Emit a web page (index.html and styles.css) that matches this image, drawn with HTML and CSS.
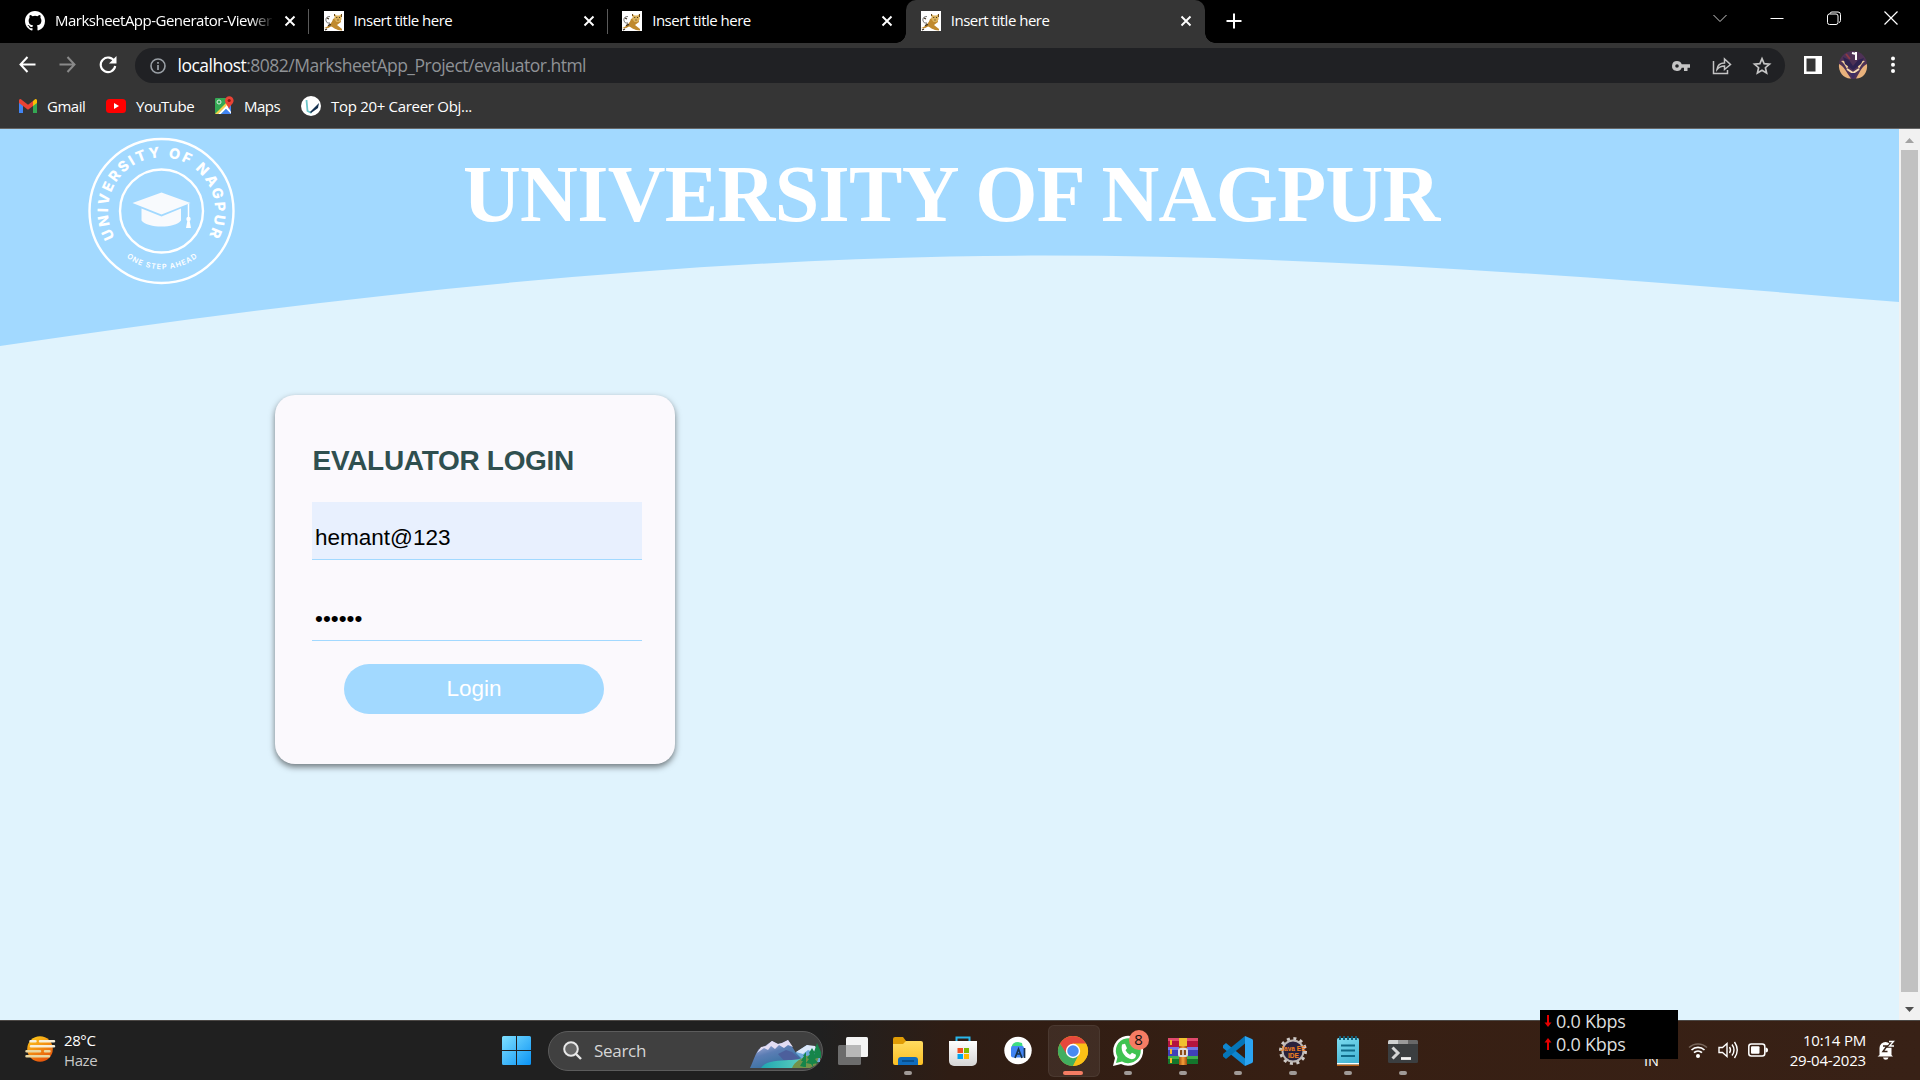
FILE: index.html
```html
<!DOCTYPE html>
<html lang="en">
<head>
<meta charset="utf-8">
<title>Evaluator Login</title>
<link rel="stylesheet" href="styles.css">
</head>
<body>
<svg width="0" height="0" class="defs">
  <defs>
    <symbol id="cat" viewBox="0 0 20 20">
      <rect width="20" height="20" fill="#fff"/>
      <path d="M6 5.500Q1 5.500 2 10q1 3 4 2" stroke="#777" stroke-width="1" fill="none"/>
      <path d="M0 17c4-1 8-5 9-9l2-1h5l1 4-4 3 5 4v1.500C12 19.500 9 16 7 15.500c-3 2-5 2-7 1.500z" fill="#c08a2e"/>
      <path d="M10.500 3l2 1.500h3l2-1.500v5.500l-2 2.500h-3l-2-2.500z" fill="#dcb25a"/>
      <path d="M5 13l2 1M3 7l2 1M4 14l1.500 1M12.300 6.500h.9M15 6.500h.9M13.500 9h1M1 19l2-1" stroke="#3b2d1c" stroke-width="1.200"/>
      <path d="M10.500 3v2M17.500 3v3" stroke="#6a4a1c" stroke-width="1"/>
    </symbol>
    <symbol id="x" viewBox="0 0 12 12"><path d="M1.500 1.500l9 9m0-9l-9 9" stroke="#fff" stroke-width="1.900"/></symbol>
    <linearGradient id="win" x2="1" y2="1"><stop stop-color="#7fe0ff"/><stop offset="1" stop-color="#0a93f5"/></linearGradient>
    <linearGradient id="sun" x2=".5" y2="1"><stop stop-color="#ffd21a"/><stop offset="1" stop-color="#e8590c"/></linearGradient>
    <linearGradient id="mount" x1="0" y1="0" x2=".6" y2="1"><stop stop-color="#d6ccef"/><stop offset=".5" stop-color="#5b7db4"/><stop offset="1" stop-color="#2e6f9c"/></linearGradient>
    <linearGradient id="lake" x2="1"><stop stop-color="#20a8b0"/><stop offset="1" stop-color="#5fd0c0"/></linearGradient>
    <linearGradient id="fold" y2="1" x2="0"><stop stop-color="#ffdc60"/><stop offset="1" stop-color="#fbbf24"/></linearGradient>
    <linearGradient id="bag" y2="1" x2="0"><stop stop-color="#fff"/><stop offset="1" stop-color="#d5d5d5"/></linearGradient>
    <linearGradient id="note" y2="1" x2=".4"><stop stop-color="#7ddcf0"/><stop offset="1" stop-color="#45b5d5"/></linearGradient>
    <linearGradient id="belt" x2="1"><stop stop-color="#a8500e"/><stop offset=".5" stop-color="#f5a13a"/><stop offset="1" stop-color="#a04a0c"/></linearGradient>
  </defs>
</svg>

<div class="tabs">
  <div class="tab">
    <svg width="20" height="20" viewBox="0 0 16 16"><path fill="#fff" d="M8 0C3.58 0 0 3.58 0 8c0 3.54 2.29 6.53 5.47 7.59.4.07.55-.17.55-.38 0-.19-.01-.82-.01-1.49-2.01.37-2.53-.49-2.69-.94-.09-.23-.48-.94-.82-1.13-.28-.15-.68-.52-.01-.53.63-.01 1.08.58 1.23.82.72 1.21 1.87.87 2.33.66.07-.52.28-.87.51-1.07-1.78-.2-3.64-.89-3.64-3.95 0-.87.31-1.59.82-2.15-.08-.2-.36-1.02.08-2.12 0 0 .67-.21 2.2.82a7.6 7.6 0 0 1 4 0c1.53-1.04 2.2-.82 2.2-.82.44 1.1.16 1.92.08 2.12.51.56.82 1.27.82 2.15 0 3.07-1.87 3.75-3.65 3.95.29.25.54.73.54 1.48 0 1.07-.01 1.93-.01 2.2 0 .21.15.46.55.38A8.01 8.01 0 0 0 16 8c0-4.42-3.58-8-8-8z"/></svg>
    <span class="tab-title faded">MarksheetApp-Generator-Viewer</span>
    <svg width="12" height="12"><use href="#x"/></svg>
  </div>
  <div class="tab">
    <svg width="20" height="20"><use href="#cat"/></svg>
    <span class="tab-title">Insert title here</span>
    <svg width="12" height="12"><use href="#x"/></svg>
  </div>
  <div class="tab no-line">
    <svg width="20" height="20"><use href="#cat"/></svg>
    <span class="tab-title">Insert title here</span>
    <svg width="12" height="12"><use href="#x"/></svg>
  </div>
  <div class="tab active">
    <svg width="20" height="20"><use href="#cat"/></svg>
    <span class="tab-title">Insert title here</span>
    <svg width="12" height="12"><use href="#x"/></svg>
  </div>
  <svg class="plus" width="16" height="16"><path d="M8 .5v15M.5 8h15" stroke="#fff" stroke-width="2"/></svg>
  <div class="window-buttons">
    <svg width="14" height="14"><path d="M.5 4l6.500 6.500L13.500 4" stroke="#ccc" fill="none"/></svg>
    <svg width="14" height="14"><path d="M.5 7.500h13" stroke="#fff"/></svg>
    <svg width="14" height="14"><path d="M3 3V2.500a2 2 0 0 1 2-1.500h6a2.500 2.500 0 0 1 2.500 2.500v6a2 2 0 0 1-1.500 2" stroke="#fff" fill="none"/><rect x=".5" y="3" width="10.500" height="10.500" rx="2" stroke="#fff" fill="none"/></svg>
    <svg width="14" height="14"><path d="M.5.5l13 13m0-13l-13 13" stroke="#fff" stroke-width="1.200"/></svg>
  </div>
</div>

<div class="toolbar">
  <div class="nav">
    <svg width="17" height="17"><path d="M16.500 8.500H1.500M8.500 1L1.500 8.500l7 7.500" stroke="#fff" stroke-width="2" fill="none"/></svg>
    <svg width="17" height="17"><path d="M.5 8.500h15M8.500 1l7 7.500-7 7.500" stroke="#8a8a8a" stroke-width="2" fill="none"/></svg>
    <svg width="18" height="18"><path d="M15.500 5.500A7.300 7.300 0 1 0 16.200 10" stroke="#fff" stroke-width="2.100" fill="none"/><path d="M17.500 0v7.500H10z" fill="#fff"/></svg>
  </div>
  <div class="omnibox">
    <svg width="16" height="16"><circle cx="8" cy="8" r="7" stroke="#9aa0a6" stroke-width="1.600" fill="none"/><path d="M8 7v5M8 4v1.800" stroke="#9aa0a6" stroke-width="1.700"/></svg>
    <span class="url"><b>localhost</b>:8082/MarksheetApp_Project/evaluator.html</span>
    <div class="omni-icons">
      <svg width="18" height="18" viewBox="0 0 18 18"><path fill-rule="evenodd" fill="#c4c4c4" d="M5 4a5 5 0 1 0 4.700 6.800H12V14h3.500v-3.200H18V7.200H9.700A5 5 0 0 0 5 4zm0 3.200a1.800 1.800 0 1 1 0 3.600 1.800 1.800 0 0 1 0-3.600z"/></svg>
      <svg width="20" height="20" viewBox="0 0 20 20"><path d="M1.500 5v12.500h14V14M5 13.500c.5-4.500 3.500-6.500 7.500-6.500V3l6 5.500-6 5v-3.500C9 10 7 11 5 13.500z" stroke="#c4c4c4" stroke-width="1.500" fill="none"/></svg>
      <svg width="18" height="18" viewBox="0 0 18 18"><path d="M9 1.600l2.100 5 5.400.5-4.100 3.600 1.200 5.300L9 13.200 4.400 16l1.200-5.300-4.100-3.600 5.400-.5z" stroke="#c4c4c4" stroke-width="1.700" fill="none"/></svg>
    </div>
  </div>
  <div class="actions">
    <svg width="18" height="18"><path fill="#fff" fill-rule="evenodd" d="M0 0h18v18H0zM2.500 2.500v13h9v-13z"/></svg>
    <svg width="28" height="28" viewBox="0 0 28 28"><circle cx="14" cy="14" r="14" fill="#4e3256"/><path d="M0 13c5 2 7 8 12 14.500C5 28-1 21 0 13zM28 13c-5 2-7 8-11 14.500 7 0 12-6 11-14.500z" fill="#e9b27c"/><path d="M2 10q5-1 8 3l-2 5q-3-6-6-8zM26 10q-5-1-8 3l2 5q3-6 6-8z" fill="#f3cf9c"/><path d="M4 6l6 3 4 6 5-6 6-2-3 6-8 6-8-6z" fill="#2e2350"/><path d="M8 18l6 4 6-4" stroke="#f7dcb4" stroke-width="2" fill="none"/><path d="M17 1v8M13 2l4 1" stroke="#fff" stroke-width="2"/><path d="M7 3l4 5" stroke="#8c3a45" stroke-width="2"/><path d="M11 22l3 6 3-6" fill="#3c2d66"/></svg>
    <svg width="4" height="18"><circle cx="2" cy="2.500" r="2" fill="#fff"/><circle cx="2" cy="8.700" r="2" fill="#fff"/><circle cx="2" cy="15" r="2" fill="#fff"/></svg>
  </div>
</div>

<div class="bookmarks">
  <div class="bm gmail"><svg width="18" height="14" viewBox="0 0 18 14"><path d="M0 2v12h4V6z" fill="#4285f4"/><path d="M18 2v12h-4V6z" fill="#34a853"/><path d="M14 2l2-1.700a1.300 1.300 0 0 1 2 1.200V4l-4 3z" fill="#fbbc04"/><path d="M0 1.500A1.300 1.300 0 0 1 2 .3l7 5.400 5-3.700v5L9 10.700 0 4z" fill="#ea4335"/></svg><span>Gmail</span></div>
  <div class="bm youtube"><svg width="20" height="14"><rect width="20" height="14" rx="3.500" fill="#f00"/><path d="M8 4v6l5-3z" fill="#fff"/></svg><span>YouTube</span></div>
  <div class="bm maps"><svg width="19" height="19" viewBox="0 0 19 19"><rect y="2" width="16" height="16" rx="1" fill="#34a853"/><path d="M16 18V8L7 18z" fill="#4285f4"/><path d="M0 18L14 4l2 2L3 18z" fill="#fbd04a"/><path d="M3 18l9-9 4 7v2l-5-5-5 5z" fill="#fff"/><path d="M6 18l5-5 5 5z" fill="#4285f4"/><circle cx="4" cy="6" r="2" stroke="#d8efe0" fill="none"/><path d="M14 13c-1-4-4-5-4-8.500a4.300 4.300 0 0 1 8.600 0C18.500 8 15 9 14 13z" fill="#ea4335"/><circle cx="14.200" cy="4.500" r="1.600" fill="#8c1b12"/></svg><span>Maps</span></div>
  <div class="bm top"><svg width="20" height="20"><circle cx="10" cy="10" r="10" fill="#fff"/><path d="M5.500 4l1 11 4 2" stroke="#6cc5c9" stroke-width="1.800" fill="none"/><path d="M9 16l9-9-1 5-7 5z" fill="#14304f"/></svg><span>Top 20+ Career Obj...</span></div>
</div>

<div class="viewport">
  <div class="page">
    <header class="banner">
      <svg class="wave" width="1899" height="218" viewBox="0 0 1899 218"><path fill="#a2d9ff" d="M0 0v217C317 170 633 134 950 127.500C1266 121.500 1583 147 1899 173V0z"/></svg>
      <div class="banner-content">
        <svg class="logo" width="150" height="150" viewBox="0 0 150 150">
          <defs>
            <path id="arcTop" d="M29 103A53.500 53.500 0 1 1 120 103"/>
            <path id="arcBottom" d="M38.700 120.600A58.500 58.500 0 0 0 111.300 120.600"/>
          </defs>
          <circle cx="74.500" cy="75" r="72" fill="none" stroke="#fff" stroke-width="2.400"/>
          <circle cx="74.500" cy="75" r="41.500" fill="none" stroke="#fff" stroke-width="2.400"/>
          <text class="logo-name" textLength="221"><textPath href="#arcTop" startOffset="2">UNIVERSITY OF NAGPUR</textPath></text>
          <text class="logo-motto" textLength="76"><textPath href="#arcBottom" startOffset="1">ONE STEP AHEAD</textPath></text>
          <path d="M45.500 67l29-10.500 29 10.500-29 11.500z" fill="#f8fafd"/>
          <path d="M54.500 72.500l20 8 19.500-8v12c-6 8-33 8-39.500 0z" fill="#f8fafd"/>
          <path d="M101.500 68v15" stroke="#fff" stroke-width="1.500"/>
          <circle cx="101.500" cy="83" r="2.200" fill="#fff"/><path d="M100.500 84h2l1.500 8h-5z" fill="#fff"/>
        </svg>
        <h1>UNIVERSITY OF NAGPUR</h1>
      </div>
    </header>
    <form class="card">
      <h2>EVALUATOR LOGIN</h2>
      <div class="field filled">hemant@123</div>
      <div class="field">••••••</div>
      <div class="login">Login</div>
    </form>
  </div>
  <div class="scrollbar">
    <svg width="21" height="21"><path d="M6 14l4.500-5 4.500 5z" fill="#a3a3a3"/></svg>
    <div class="thumb"></div>
    <svg width="21" height="21"><path d="M6 8l4.500 5L15 8z" fill="#505050"/></svg>
  </div>
</div>

<div class="taskbar">
  <div class="weather">
    <svg width="30" height="28"><circle cx="15" cy="14" r="12.800" fill="url(#sun)"/><path d="M5.500 6.300h5M15 6.300h14M6 11.300h23" stroke="#f8efd8" stroke-width="2.500" stroke-linecap="round"/><path d="M1.500 16.300H15M20 16.300h4.500M1.500 21.300H24" stroke="#ead7a0" stroke-width="2.500" stroke-linecap="round"/></svg>
    <div class="weather-text"><span>28°C</span><span class="dim">Haze</span></div>
  </div>
  <svg class="start" width="29" height="29"><path fill="url(#win)" d="M0 1.500A1.500 1.500 0 0 1 1.500 0H14v14H0zM15 0h12.500A1.500 1.500 0 0 1 29 1.500V14H15zM0 15h14v14H1.500A1.500 1.500 0 0 1 0 27.500zM15 15h14v12.500a1.500 1.500 0 0 1-1.500 1.500H15z"/></svg>
  <div class="search">
    <svg width="19" height="19"><circle cx="8" cy="8" r="6.800" stroke="#e8e8e8" stroke-width="2" fill="#666"/><path d="M13 13l5 5" stroke="#e8e8e8" stroke-width="2.400"/></svg>
    <span>Search</span>
    <svg class="scene" width="71" height="29" viewBox="0 0 71 29">
      <path d="M42 15L57 5l13 5v12H45z" fill="#6fa9dc"/><path d="M46 12L57 5l8 1 4 6-6 0-5-2-5 4z" fill="#dce8fa"/>
      <path d="M0 28C3 22 5 14 9 9l6-3 7-5 6 3 4-1 6-3 8 13 8 8-20 7z" fill="url(#mount)"/>
      <path d="M7 13l4-6 5-1 6-5 6 3 4-1 6-3 5 7-5-2-4 3-5-3-4 4-4-3-3 4-4-2z" fill="#e2dcf3"/>
      <path d="M28 14l8-4 6 2 8 7-12 6z" fill="#4c5f9c"/>
      <path d="M11 28c5-8 18-7 28-8 8 0 12-1 15-3l-8 11z" fill="url(#lake)"/>
      <path d="M42 28c3-7 9-9 14-12l14-2-4 11-6 3z" fill="#73924a"/>
      <path d="M54 27l-4-1 3-5-2 0 3-5-1 0 3-4v15zM61 24l-5-1 3-4-2-1 3-4-1-1 3-5 3 5-1 1 3 4-2 1 3 4-5 1v3zM67 18l-4-1 2-4-1-1 3-9 4 9v6z" fill="#16854a"/>
    </svg>
  </div>
  <div class="apps">
    <div class="app"><svg width="30" height="30"><rect y="9" width="23" height="20" rx="1.500" fill="#6c6c6c"/><rect x="8" y="1" width="22" height="20" rx="1.500" fill="#f4f4f4"/><path d="M8 9h15v12H8z" fill="#b8b8b8"/></svg></div>
    <div class="app run"><svg width="30" height="30"><path d="M0 3a2 2 0 0 1 2-2h8l3 4h15v5H0z" fill="#e09c05"/><path d="M0 8h10l3-3h15a2 2 0 0 1 2 2v20a2 2 0 0 1-2 2H2a2 2 0 0 1-2-2z" fill="url(#fold)"/><path d="M5 29v-5a3 3 0 0 1 3-3h14a3 3 0 0 1 3 3v5z" fill="#0f6cbd"/><path d="M9 25h12" stroke="#07477f" stroke-width="1.500"/></svg></div>
    <div class="app"><svg width="30" height="30"><path d="M8.500 6V1.500h13V6" stroke="#29b6ea" stroke-width="2" fill="none"/><path d="M1 5h28v20a5 5 0 0 1-5 5H6a5 5 0 0 1-5-5z" fill="url(#bag)"/><path d="M9.500 12H15v5H9.500z" fill="#f25022"/><path d="M16 12h5v5h-5z" fill="#7fba00"/><path d="M9.500 18H15v5H9.500z" fill="#00a4ef"/><path d="M16 18h5v5h-5z" fill="#ffb900"/></svg></div>
    <div class="app"><svg width="30" height="30"><circle cx="15" cy="14.500" r="13.700" fill="#fff"/><path d="M8.500 11q1-5 6.500-5l4 1 1 5z" fill="#3ddc84"/><rect x="8" y="10" width="13" height="11.500" rx="2" fill="#4285f4"/><path d="M12 22l3.500-9 3.500 9M13.500 18h4M21.500 12v10" stroke="#17324d" stroke-width="1.700" fill="none"/></svg></div>
    <div class="app current"><svg width="30" height="30" viewBox="0 0 48 48"><circle cx="24" cy="24" r="24" fill="#fbbc05"/><path d="M24 24H12L3.200 12A24 24 0 0 0 24 48l9-18z" fill="#34a853"/><path d="M24 48a24 24 0 0 0 20.800-36H24l10 18z" fill="#fbbc05"/><path d="M24 12h20.800A24 24 0 0 0 3.200 12L14 29z" fill="#e33b2e"/><circle cx="24" cy="24" r="11.500" fill="#fff"/><circle cx="24" cy="24" r="9.200" fill="#3b82f0"/></svg></div>
    <div class="app run"><svg width="30" height="30"><path d="M0 30l2-8A15 15 0 1 1 8 28z" fill="#fff"/><path d="M3 27l1.500-6A12.500 12.500 0 1 1 9 25.500z" fill="#3fc351"/><path d="M9 8.500l3-.8 2 4.500-1.500 2q1.500 3 4.500 4.500l2-2 4 2q0 4-4 4.500C13 23 7 16 9 8.500z" fill="#fff"/></svg><span class="badge">8</span></div>
    <div class="app run"><svg width="30" height="30"><path d="M0 2h30v9H0z" fill="#b4143f"/><path d="M0 2h30v3H0z" fill="#e04a6c"/><path d="M0 11h30v9H0z" fill="#4040b8"/><path d="M0 11h30v3H0z" fill="#7676e8"/><path d="M0 20h30v8H0z" fill="#14762c"/><path d="M0 20h30v3H0z" fill="#43b04c"/><path d="M3 4v5M3 13v5M3 22v5" stroke="#f7b62a" stroke-width="2"/><rect x="11" y="2" width="8" height="27" fill="url(#belt)"/><path d="M11 2h8v8h-8z" fill="#f0c12e"/><rect x="11" y="13" width="8" height="7" rx="1.500" stroke="#ddd" stroke-width="2" fill="#8b4a15"/><path d="M15 14v5" stroke="#eee" stroke-width="1.500"/></svg></div>
    <div class="app run"><svg width="30" height="30" viewBox="0 0 30 30"><path d="M0 9.500L3 7l19 15.500V30L0 12z" fill="#0f86cf"/><path d="M0 20.500L3 23 22 7.500V0L0 18z" fill="#0575b8"/><path d="M22 0l7 3a2 2 0 0 1 1 2v20a2 2 0 0 1-1 2l-7 3z" fill="#2ba4f2"/></svg></div>
    <div class="app run"><svg width="30" height="30"><circle cx="15" cy="15" r="12.500" fill="none" stroke="#d0cbc8" stroke-width="3" stroke-dasharray="3 3.545"/><circle cx="15" cy="15" r="10.500" fill="#28213c" stroke="#bdb8b5" stroke-width="2"/><text class="java" x="2.500" y="14.500" textLength="25" lengthAdjust="spacingAndGlyphs">Java EE</text><text class="java" x="10" y="21.500" textLength="11" lengthAdjust="spacingAndGlyphs">IDE</text></svg></div>
    <div class="app run"><svg width="30" height="30"><rect x="4" y="2" width="22" height="28" rx="1.500" fill="url(#note)"/><path d="M4 27h22v1.500H4z" fill="#fff"/><path d="M4 28.500h22V30H4z" fill="#b96018"/><path d="M7 0v4M11 0v4M15 0v4M19 0v4M23 0v4" stroke="#14607a" stroke-width="2"/><path d="M8 9.500h14M8 14.500h14M8 20h14" stroke="#106a88" stroke-width="2"/></svg></div>
    <div class="app run"><svg width="30" height="30"><rect y="4" width="30" height="23" rx="1.500" fill="#3b3e40"/><path d="M0 8V5.500Q0 4 1.500 4H10v4z" fill="#d0d0d0"/><path d="M10 4h10v4H10z" fill="#9a9a9a"/><path d="M20 4h8.500Q30 4 30 5.500V8H20z" fill="#686868"/><path d="M4.500 11.500l5.500 5.500-5.500 5.500" stroke="#d5d5d5" stroke-width="3" fill="none"/><path d="M13 22.500h10" stroke="#f3f3f3" stroke-width="2.800"/></svg></div>
  </div>
  <div class="tray">
    <span class="lang">IN</span>
    <svg width="20" height="20"><path d="M1 7.500a13 13 0 0 1 18 0" stroke="#77665b" stroke-width="1.500" fill="none"/><path d="M3.500 10a9.500 9.500 0 0 1 13 0M6 12.700a6 6 0 0 1 8 0" stroke="#fff" stroke-width="1.700" fill="none"/><circle cx="10" cy="16" r="2" fill="#fff"/></svg>
    <svg width="20" height="20"><path d="M1 7.500h3.500l4.500-4v13l-4.500-4H1z" stroke="#fff" stroke-width="1.400" fill="none"/><path d="M11.500 7q2 3 0 6M14 4.500q4 5.500 0 11M16.500 2q5.500 8 0 16" stroke="#fff" stroke-width="1.400" fill="none"/></svg>
    <svg width="20" height="20"><rect x=".8" y="4" width="16" height="12" rx="2.500" stroke="#fff" stroke-width="1.500" fill="none"/><rect x="3" y="6.200" width="8.500" height="7.600" rx="1" fill="#fff"/><path d="M17.500 7.500q2.500 0 2.500 2.500t-2.500 2.500z" fill="#fff"/></svg>
    <div class="clock"><span>10:14 PM</span><span>29-04-2023</span></div>
    <svg class="bell" width="18" height="20"><path d="M2.500 15V8a6 6 0 0 1 12 0v7l1.500 1.500H.5zM6 17.500h5.500a2.800 2.800 0 0 1-5.500 0z" fill="#fff"/><path d="M6 6h4l-4 5.500h4.500" stroke="#38251b" stroke-width="1.500" fill="none"/><path d="M12 1.500h4.500L12.500 6H17" stroke="#38251b" stroke-width="3.500" fill="none"/><path d="M12 1.500h4.500L12.500 6H17" stroke="#fff" stroke-width="1.300" fill="none"/></svg>
  </div>
</div>

<div class="speed">
  <div><svg width="8" height="12"><path d="M4 0v8" stroke="#e60000" stroke-width="2"/><path d="M.5 7.500h7L4 12z" fill="#e60000"/></svg><span>0.0 Kbps</span></div>
  <div><svg width="8" height="12"><path d="M4 12V4" stroke="#e60000" stroke-width="2"/><path d="M.5 4.500h7L4 0z" fill="#e60000"/></svg><span>0.0 Kbps</span></div>
</div>
</body>
</html>
```
FILE: styles.css
```css
* { box-sizing: border-box; }
body {
  margin: 0;
  width: 1920px;
  height: 1080px;
  overflow: hidden;
  display: flex;
  flex-direction: column;
  background: #000;
  color: #fff;
  font-family: "Open Sans", "Noto Sans", sans-serif;
  font-size: 15px;
  position: relative;
}
svg { display: block; flex: none; overflow: visible; }
.defs { position: absolute; }

/* browser chrome */
.tabs { display: flex; height: 43px; flex: none; padding-left: 10.500px; background: #000; }
.tab {
  width: 298.600px; height: 43px; flex: none;
  display: flex; align-items: center; gap: 10px;
  padding: 0 13px 1px 14.500px;
  position: relative;
  background: linear-gradient(#5a5a5a, #5a5a5a) right 9px / 1px 25px no-repeat;
}
.tab.no-line { background: none; }
.tab-title { flex: 1; white-space: nowrap; overflow: hidden; letter-spacing: -0.500px; padding-bottom: 2px; }
.faded { -webkit-mask-image: linear-gradient(90deg, #000 195px, transparent 219px); mask-image: linear-gradient(90deg, #000 195px, transparent 219px); }
.tab.active { background: #353535; border-radius: 10px 10px 0 0; }
.tab.active::before, .tab.active::after { content: ""; position: absolute; bottom: 0; width: 10px; height: 10px; }
.tab.active::before { left: -10px; background: radial-gradient(circle at 0 0, transparent 9.500px, #353535 10px); }
.tab.active::after { right: -10px; background: radial-gradient(circle at 100% 0, transparent 9.500px, #353535 10px); }
.plus { margin: 13px 0 0 21px; }
.window-buttons { margin-left: auto; display: flex; height: 37px; }
.window-buttons svg { margin: 11px 21.600px; }

.toolbar { display: flex; height: 44px; flex: none; background: #353535; align-items: center; }
.nav { display: flex; gap: 23px; width: 135px; padding-left: 19px; }
.omnibox {
  width: 1650px; height: 35px; border-radius: 18px; background: #202124;
  display: flex; align-items: center; padding: 0 14px 0 14.500px; margin-top: 1px;
}
.url { margin: -1px 0 0 12px; font-size: 17.500px; letter-spacing: -0.510px; color: #8f9296; }
.url b { font-weight: 400; color: #fff; }
.omni-icons { margin-left: auto; display: flex; align-items: center; gap: 21.500px; }
.actions { display: flex; align-items: center; flex: 1; padding-left: 18.500px; gap: 17px; }
.actions svg:last-child { margin-left: 7px; }

.bookmarks { display: flex; height: 42px; flex: none; background: #353535; border-bottom: 1px solid #666; padding: 0 0 4px 19px; align-items: center; }
.bm { display: flex; align-items: center; gap: 10px; letter-spacing: -0.500px; white-space: nowrap; }
.gmail { width: 87px; }
.youtube { width: 109px; }
.maps { width: 86px; }
.top { letter-spacing: -0.300px; }

/* web page */
.viewport { display: flex; height: 891px; flex: none; }
.page { width: 1899px; background: #e0f3fd; font-family: "Liberation Sans", Arial, sans-serif; }
.banner { display: grid; height: 266px; align-items: start; }
.wave, .banner-content { grid-area: 1 / 1; }
.banner-content { display: flex; padding-left: 87px; align-items: flex-start; }
.logo { margin-top: 6.500px; }
.logo-name { font: 800 14.500px "Inter", "Open Sans", sans-serif; fill: #fff; }
.logo-motto { font: 600 7.300px "Inter", "Open Sans", sans-serif; fill: #fff; }
.banner h1 {
  margin: 19px 0 0 226px; color: #fff; white-space: nowrap; letter-spacing: -0.650px;
  font: bold 80px/92px "Liberation Serif", "Times New Roman", serif;
}
.card {
  width: 400px; height: 369px; margin-left: 275px; padding: 50px 37px 0;
  border-radius: 20px; background: #fbf9fd; box-shadow: 0 3px 6px rgba(0, 0, 0, .5);
  color: #000;
}
.card h2 { margin: 0 0 25px 0.500px; font-size: 28px; line-height: 32px; color: #2f4f4f; letter-spacing: -0.300px; }
.field {
  width: 330px; height: 58px; margin-bottom: 23px; padding: 23px 3px 0;
  border-bottom: 1px solid #a2d9ff; font-size: 22.500px; line-height: 26px;
}
.filled { background: #e8f0fe; }
.login {
  width: 260px; height: 50px; margin-left: 32px; border-radius: 25px;
  background: #a2d9ff; color: #fff; text-align: center; font-size: 22.500px; line-height: 49px;
}
.scrollbar { width: 21px; background: #f1f1f1; display: flex; flex-direction: column; }
.thumb { flex: 1; margin: 0 2px 7px; background: #c1c1c1; }

/* taskbar */
.taskbar {
  height: 60px; flex: none; display: flex; align-items: center;
  border-top: 1px solid #4c4845;
  background: linear-gradient(90deg, #202020 0, #202020 820px, #2f1d14 950px, #371f13 1300px, #382116 100%);
}
.weather { display: flex; align-items: center; gap: 9px; width: 502px; padding-left: 25px; }
.weather svg { margin-top: -3px; }
.weather-text, .clock { display: flex; flex-direction: column; line-height: 20px; letter-spacing: -0.400px; margin-top: -2px; }
.dim { color: #c8c8c8; }
.search {
  width: 275px; height: 40px; margin-left: 17px; padding-left: 14px;
  border-radius: 20px; border: 1px solid #5c5c5c; background: #404040;
  display: flex; align-items: center; gap: 12px; font-size: 17px; color: #d6d6d6; letter-spacing: -0.300px;
}
.search span { margin-top: -1px; }
.scene { margin: 8px 1px 0 auto; }
.apps { display: flex; margin-left: 2px; }
.app { width: 55px; height: 50px; display: flex; justify-content: center; align-items: center; position: relative; }
.run::after, .current::after { content: ""; position: absolute; bottom: 1px; left: 23.500px; width: 8px; height: 4px; border-radius: 2px; background: #a09a97; }
.current::before { content: ""; position: absolute; left: 2.500px; width: 50px; height: 50px; border-radius: 6px; background: rgba(255, 255, 255, .07); border: 1px solid rgba(255, 255, 255, .06); }
.current::after { left: 17.500px; width: 20px; background: #f57c63; }
.badge { position: absolute; left: 28.500px; top: 4px; width: 20px; height: 20px; border-radius: 50%; background: #f57c63; color: #111; text-align: center; line-height: 19px; font-size: 15px; }
.java { font: bold 8px "Liberation Sans", sans-serif; fill: #f58220; }
.tray { margin-left: auto; display: flex; align-items: center; gap: 10px; padding-right: 25px; }
.tray > svg { margin-top: -1px; }
.lang { margin: 20px 19px 0 0; font-size: 14.500px; }
.clock { width: 88px; align-items: flex-end; margin-right: 1px; white-space: nowrap; letter-spacing: -0.200px; }

/* network meter floating over the taskbar */
.speed { position: absolute; left: 1540px; top: 1010px; width: 138px; height: 49px; background: #000; padding-left: 4px; font-size: 18px; line-height: 22.500px; color: #ddd; letter-spacing: -0.250px; }
.speed div { display: flex; align-items: center; gap: 4px; }
```
